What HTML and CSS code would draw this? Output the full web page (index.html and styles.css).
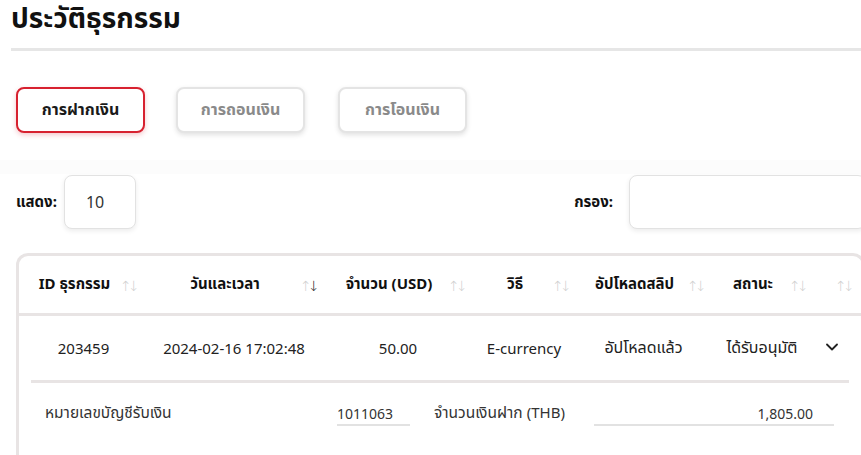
FILE: index.html
```html
<!DOCTYPE html>
<html lang="th">
<head>
<meta charset="utf-8">
<title>ประวัติธุรกรรม</title>
<link rel="stylesheet" href="styles.css">
</head>
<body>
<div class="page">
  <header class="head">
    <h1 class="title">ประวัติธุรกรรม</h1>
    <div class="rule"></div>
  </header>

  <nav class="tabs">
    <button class="tab tab-active">การฝากเงิน</button>
    <button class="tab">การถอนเงิน</button>
    <button class="tab">การโอนเงิน</button>
  </nav>

  <div class="band"></div>

  <div class="controls">
    <label class="ctl">
      <span class="ctl-label">แสดง:</span>
      <span class="box box-len">10</span>
    </label>
    <label class="ctl">
      <span class="ctl-label">กรอง:</span>
      <span class="box box-filter"></span>
    </label>
  </div>

  <section class="card">
    <div class="thead">
      <div class="th"><span class="th-text">ID ธุรกรรม</span><span class="sort"><i>↑</i><i>↓</i></span></div>
      <div class="th"><span class="th-text">วันและเวลา</span><span class="sort"><i>↑</i><i class="on">↓</i></span></div>
      <div class="th"><span class="th-text">จำนวน (USD)</span><span class="sort"><i>↑</i><i>↓</i></span></div>
      <div class="th"><span class="th-text">วิธี</span><span class="sort"><i>↑</i><i>↓</i></span></div>
      <div class="th"><span class="th-text">อัปโหลดสลิป</span><span class="sort"><i>↑</i><i>↓</i></span></div>
      <div class="th"><span class="th-text">สถานะ</span><span class="sort"><i>↑</i><i>↓</i></span></div>
      <div class="th"><span class="th-text"></span><span class="sort"><i>↑</i><i>↓</i></span></div>
    </div>
    <div class="trow">
      <div class="td">203459</div>
      <div class="td">2024-02-16 17:02:48</div>
      <div class="td">50.00</div>
      <div class="td">E-currency</div>
      <div class="td thai">อัปโหลดแล้ว</div>
      <div class="td thai">ได้รับอนุมัติ</div>
      <div class="td td-chev">
        <svg width="12" height="8" viewBox="0 0 12 8"><polyline points="1,1.5 6,6.5 11,1.5" fill="none" stroke="#222" stroke-width="1.8" stroke-linecap="round" stroke-linejoin="round"/></svg>
      </div>
    </div>
    <div class="detail">
      <span class="d-label">หมายเลขบัญชีรับเงิน</span>
      <span class="d-val d-val-acc">1011063</span>
      <span class="d-label d-label2">จำนวนเงินฝาก <span class="latin">(THB)</span></span>
      <span class="d-val d-val-amt">1,805.00</span>
    </div>
  </section>
</div>
</body>
</html>
```

FILE: styles.css
```css
* { box-sizing: border-box; }
html, body { margin: 0; padding: 0; background: #fff; overflow: hidden; }
body {
  font-family: "Noto Sans", "Noto Sans Thai", "DejaVu Sans", sans-serif;
  color: #222;
}
.page { width: 880px; }

.head { margin-left: 11px; }
.title {
  margin: 0;
  font-size: 28px;
  line-height: 34px;
  font-weight: 700;
  color: #111;
}
.rule { height: 3px; background: #e6e6e6; margin-top: 14px; }

.tabs {
  display: flex;
  gap: 31px;
  padding-left: 16px;
  margin-top: 36px;
}
.tab {
  width: 129px;
  height: 46px;
  border: 2px solid #e4e4e4;
  border-radius: 8px;
  background: #fff;
  box-shadow: 0 2px 5px rgba(0,0,0,0.12);
  font-family: inherit;
  font-size: 16px;
  font-weight: 700;
  color: #8a8a8a;
  padding: 0;
}
.tab + .tab + .tab { margin-left: 2px; }
.tab-active { border-color: #d7212f; color: #1a1a1a; box-shadow: 0 2px 5px rgba(215,33,47,0.25); }

.band { height: 14px; margin-top: 27px; background: #fcfcfc; }

.controls {
  display: flex;
  justify-content: space-between;
  align-items: center;
  padding-left: 16px;
  width: 866px;
  margin-top: 1px;
}
.ctl { display: flex; align-items: center; }
.ctl-label { font-size: 15px; font-weight: 700; color: #111; }
.box {
  display: flex;
  align-items: center;
  height: 54px;
  border: 1px solid #e2e2e2;
  border-radius: 8px;
  background: #fff;
  box-shadow: 0 2px 5px rgba(0,0,0,0.08);
  font-size: 16px;
  color: #333;
}
.box-len { width: 72px; margin-left: 7px; padding-left: 21px; }
.box-filter { width: 237px; margin-left: 16px; }

.card {
  margin-left: 16px;
  margin-top: 24px;
  width: 849px;
  height: 220px;
  border: 3px solid #e8e4e4;
  border-bottom: none;
  border-radius: 12px 12px 0 0;
}
.thead, .trow {
  display: grid;
  grid-template-columns: 121px 180px 148px 104px 135px 102px 46px;
}
.thead { height: 60px; border-bottom: 3px solid #e8e4e4; }
.th {
  display: flex;
  align-items: center;
  padding-left: 10px;
  padding-right: 4px;
}
.th-text {
  flex: 1;
  text-align: center;
  font-size: 15px;
  font-weight: 700;
  color: #111;
  white-space: nowrap;
}
.sort { display: flex; width: 16px; font-size: 14px; color: #cfcfcf; }
.sort i { font-style: normal; width: 8px; text-align: center; line-height: 1; padding-top: 3px; font-weight: 300; }
.sort i.on { color: #222; }

.trow { height: 64px; }
.td {
  display: flex;
  align-items: center;
  justify-content: center;
  padding-left: 8px;
  font-size: 15px;
  color: #222;
  white-space: nowrap;
}
.td.thai { font-size: 16px; }
.td-chev { padding-left: 0; padding-bottom: 2px; }

.detail {
  margin: 0 13px 0 12px;
  border-top: 3px solid #e8e4e4;
  display: flex;
  align-items: center;
  height: 62px;
  padding-left: 14px;
  font-size: 14px;
  color: #333;
}
.d-label { width: 292px; white-space: nowrap; font-size: 15.5px; }
.d-label .latin { font-size: 15px; }
.d-label2 { width: 160px; margin-left: 24px; }
.d-val {
  display: block;
  border-bottom: 2px solid #e2e2e2;
  padding-bottom: 1px;
  margin-top: 4px;
  white-space: nowrap;
}
.d-val-acc { width: 73px; }
.d-val-amt { width: 240px; text-align: right; padding-right: 21px; }
```
